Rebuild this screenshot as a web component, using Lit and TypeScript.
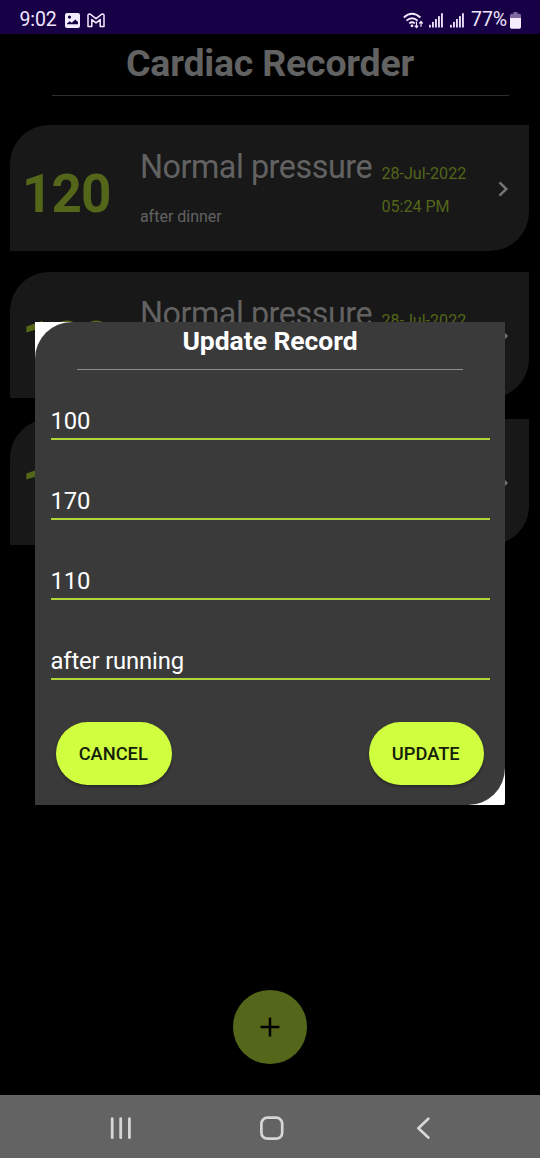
import { LitElement, html, css, svg } from "lit";
import { customElement, property } from "lit/decorators.js";

interface HeartRecord {
  rate: string;
  status: string;
  comment: string;
  date: string;
  time: string;
}

const records: HeartRecord[] = [
  { rate: "120", status: "Normal pressure", comment: "after dinner", date: "28-Jul-2022", time: "05:24 PM" },
  { rate: "120", status: "Normal pressure", comment: "", date: "28-Jul-2022", time: "" },
  { rate: "1", status: "", comment: "", date: "", time: "" },
];

@customElement("status-bar")
class StatusBar extends LitElement {
  static styles = css`
    :host {
      display: flex;
      justify-content: space-between;
      height: 33.5px;
      box-sizing: border-box;
      padding: 7px 19px 0 19.5px;
      background: #170046;
      color: #efe6ff;
      font-size: 19.5px;
      line-height: 26px;
    }
    .side { display: flex; height: 26px; }
    svg { display: block; }
    .photo { margin: 6px 0 0 8.5px; }
    .mail { margin: 6px 0 0 7px; }
    .wifi { margin: 5px 0 0; }
    .bars { margin: 6px 0 0 5px; }
    .second { margin-left: 7px; margin-right: 7px; }
    .battery { margin: 5px 0 0 3px; }
    .level { letter-spacing: -0.1px; }
    .clock { letter-spacing: -0.1px; }
  `;

  private bars(cls: string) {
    return html`<svg class="bars ${cls}" width="14" height="16" viewBox="0 0 14 16" fill="#e6dcf5">
      ${[0, 1, 2, 3, 4].map((i) => svg`<rect x=${i * 3} y=${11.8 - i * 2.9} width="1.9" height=${2.7 + i * 2.9}></rect>`)}
    </svg>`;
  }

  render() {
    return html`
      <div class="side">
        <span class="clock">9:02</span>
        <svg class="photo" width="15" height="15" viewBox="0 0 15 15">
          <path fill="#f3ecff" fill-rule="evenodd" d="M2 0H13Q15 0 15 2V13Q15 15 13 15H2Q0 15 0 13V2Q0 0 2 0ZM2 11.3H13V9L10.3 6.5L6.7 9.7L4.7 8.2L2 10.5ZM4.5 2.5A1.6 1.6 0 1 0 4.5 5.7A1.6 1.6 0 1 0 4.5 2.5Z"/>
        </svg>
        <svg class="mail" width="18" height="15" viewBox="0 0 18 15" fill="none" stroke="#f3ecff" stroke-width="1.5" stroke-linejoin="round">
          <path d="M1 13.5V2.2Q1.4.6 3.2 1.2L9 5.7L14.8 1.2Q16.6.6 17 2.2V13.5H13.2V6.6L9 9.9L4.8 6.6V13.5Z"/>
        </svg>
      </div>
      <div class="side">
        <svg class="wifi" width="21" height="18" viewBox="0 0 21 18" fill="none" stroke="#f0e8fa" stroke-width="1.8">
          <path d="M.8 5.5Q9 -1.9 17.4 5.5M3.5 8.6Q9 3.9 14.7 8.6M6.2 11.4Q9 9.2 11.8 11.4"/>
          <circle cx="9" cy="13.8" r="1.4" fill="#f0e8fa" stroke="none"/>
          <path stroke-width="1.2" d="M13.5 9.5V15.5M11.8 13.6L13.5 15.6L15.2 13.6M18 14.8V9.6M16.3 11.5L18 9.4L19.7 11.5"/>
        </svg>
        ${this.bars("")} ${this.bars("second")}
        <span class="level">77%</span>
        <svg class="battery" width="11" height="17" viewBox="0 0 11 17">
          <path fill="#80699f" d="M3.5 0H7.5V1.7H9.5Q11 1.7 11 3.5V7H0V3.5Q0 1.7 1.5 1.7H3.5Z"/>
          <path fill="#f6eefe" d="M0 6H11V15Q11 16.7 9.5 16.7H1.5Q0 16.7 0 15Z"/>
        </svg>
      </div>`;
  }
}

@customElement("record-card")
class RecordCard extends LitElement {
  @property({ attribute: false }) record!: HeartRecord;

  static styles = css`
    :host {
      display: grid;
      grid-template-columns: 129.5px 241.5px 107px 1fr;
      height: 126px;
      background: #181818;
      border-radius: 39px 0 39px 0;
      overflow: hidden;
      color: #626262;
      white-space: nowrap;
    }
    .rate {
      padding: 38px 0 0 11.5px;
      font-size: 53px;
      line-height: 62px;
      font-weight: 700;
      letter-spacing: -0.9px;
      color: #536619;
    }
    .status { padding-top: 22.5px; font-size: 32.3px; line-height: 38px; letter-spacing: -0.45px; }
    .comment { margin-top: 21.5px; font-size: 16px; line-height: 19px; }
    .when { padding-top: 39px; font-size: 16.1px; line-height: 19px; color: #536619; }
    .time { margin-top: 14px; }
    .arrow { padding: 56px 0 0 9.5px; }
    svg { display: block; }
  `;

  render() {
    const r = this.record;
    return html`
      <div class="rate">${r.rate}</div>
      <div>
        <div class="status">${r.status}</div>
        <div class="comment">${r.comment}</div>
      </div>
      <div class="when">
        <div>${r.date}</div>
        <div class="time">${r.time}</div>
      </div>
      <div class="arrow">
        <svg width="11" height="16" viewBox="0 0 11 16" fill="none" stroke="#747474" stroke-width="2.5">
          <path d="M1.5 1.3L8.3 8L1.5 14.7"/>
        </svg>
      </div>`;
  }
}

@customElement("update-dialog")
class UpdateDialog extends LitElement {
  static styles = css`
    :host { display: block; background: #fff; border-radius: 0 0 2px 0; }
    .panel {
      height: 483px;
      box-sizing: border-box;
      background: #3a3a3a;
      border-radius: 37px 0 37px 0;
      padding: 3px 15.5px 0;
      color: #fff;
    }
    .title { text-align: center; font-size: 26.5px; line-height: 31px; font-weight: 700; letter-spacing: -0.05px; }
    .rule { height: 1.5px; margin: 12.5px 26.5px 0; background: #8c8c8c; }
    .fields { display: flex; flex-direction: column; gap: 17px; padding-top: 6.5px; }
    .field {
      height: 63px;
      box-sizing: border-box;
      border-bottom: 2px solid #b2d63a;
      padding-top: 30px;
      font-size: 23.8px;
      line-height: 28px;
      letter-spacing: -0.15px;
    }
    .actions { display: flex; justify-content: space-between; padding: 42px 5.5px 0; }
    .button {
      width: 115.5px;
      height: 63px;
      border-radius: 32px;
      background: #cfff3f;
      color: #14200a;
      font-size: 18.3px;
      line-height: 64px;
      font-weight: 500;
      text-align: center;
      text-indent: -1px;
      box-shadow: 0 2px 3px rgba(0, 0, 0, 0.3);
    }
  `;

  render() {
    return html`<div class="panel">
      <div class="title">Update Record</div>
      <div class="rule"></div>
      <div class="fields">
        ${["100", "170", "110", "after running"].map((v) => html`<div class="field">${v}</div>`)}
      </div>
      <div class="actions">
        <div class="button">CANCEL</div>
        <div class="button">UPDATE</div>
      </div>
    </div>`;
  }
}

@customElement("app-root")
class AppRoot extends LitElement {
  static styles = css`
    :host {
      display: flex;
      flex-direction: column;
      position: relative;
      width: 540px;
      height: 1158px;
      overflow: hidden;
      background: #000;
      font-family: Roboto, "Liberation Sans", sans-serif;
    }
    .title {
      padding-top: 7px;
      text-align: center;
      color: #626262;
      font-size: 37.5px;
      line-height: 44px;
      font-weight: 700;
      letter-spacing: -0.22px;
    }
    .rule { height: 1.5px; margin: 10px 31px 0 52px; background: #2e2e2e; }
    .list { display: flex; flex-direction: column; gap: 21px; padding: 29px 11px 0 10.4px; }
    .dialog { position: absolute; left: 35px; top: 322px; width: 470px; }
    .fab {
      display: flex;
      align-items: center;
      justify-content: center;
      width: 73.5px;
      height: 73.5px;
      margin: auto auto 31.5px;
      border-radius: 50%;
      background: #536619;
    }
    .nav {
      display: flex;
      height: 63px;
      box-sizing: border-box;
      background: #636363;
      padding: 21px 0 0 110px;
    }
    .home { margin-left: 128px; }
    .back { margin-left: 132px; }
    svg { display: block; }
  `;

  render() {
    return html`
      <status-bar></status-bar>
      <div class="title">Cardiac Recorder</div>
      <div class="rule"></div>
      <div class="list">${records.map((r) => html`<record-card .record=${r}></record-card>`)}</div>
      <div class="fab">
        <svg width="20" height="20" viewBox="0 0 20 20" stroke="#000" stroke-width="2.5">
          <path d="M10 .6V19.4M.6 10H19.4"/>
        </svg>
      </div>
      <div class="nav">
        <svg width="22" height="25" viewBox="0 0 22 25" stroke="#d6d6d6" stroke-width="2.8" stroke-linecap="round">
          <path d="M2.2 2.7V21.7M10.7 2.7V21.7M19.4 2.7V21.7"/>
        </svg>
        <svg class="home" width="25" height="25" viewBox="0 0 25 25" fill="none" stroke="#d6d6d6" stroke-width="2.7">
          <rect x="1.4" y="1.7" width="20.8" height="21" rx="6"/>
        </svg>
        <svg class="back" width="16" height="25" viewBox="0 0 16 25" fill="none" stroke="#d6d6d6" stroke-width="2.7" stroke-linecap="round" stroke-linejoin="round">
          <path d="M11.3 2.8L1.4 12.2L11.3 21.6"/>
        </svg>
      </div>
      <update-dialog class="dialog"></update-dialog>`;
  }
}
